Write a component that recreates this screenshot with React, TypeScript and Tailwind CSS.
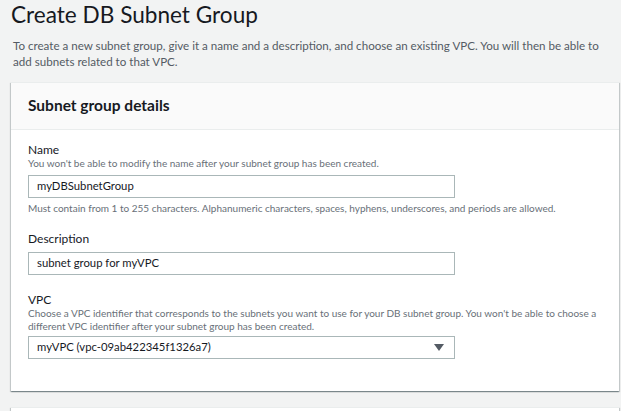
const FONT = "font-['Lato',sans-serif]";

function Field({
  label,
  hint,
  children,
  after,
  className = '',
}: {
  label: string;
  hint?: string;
  children: React.ReactNode;
  after?: string;
  className?: string;
}) {
  return (
    <div className={className}>
      <div className="text-[12px] leading-[14px] text-[#16191f]">{label}</div>
      {hint && <div className="max-w-[570px] text-[10px] leading-[13px] text-[#687078]">{hint}</div>}
      {children}
      {after && <div className="mt-[3px] text-[10px] leading-[14px] text-[#687078]">{after}</div>}
    </div>
  );
}

export default function App() {
  return (
    <div className={`h-[411px] w-[621px] overflow-hidden bg-[#f2f3f3] pl-[11px] pr-[2px] ${FONT}`}>
      <h1 className="text-[22.6px] leading-[30px] text-[#16191f]">Create DB Subnet Group</h1>
      <p className="mt-[8px] pl-[2px] text-[11.6px] leading-[16px] text-[#545b64]">
        To create a new subnet group, give it a name and a description, and choose an existing VPC. You will then be able to
        add subnets related to that VPC.
      </p>

      <div className="mt-[12px] bg-white shadow-[0_1px_1px_0_rgba(0,28,36,0.3),1px_1px_1px_0_rgba(0,28,36,0.15),-1px_1px_1px_0_rgba(0,28,36,0.15)] border-t border-[#eaeded]">
        <div className="flex h-[47px] items-center border-b border-[#eaeded] bg-[#fafafa] px-[17px]">
          <h2 className="text-[15.5px] font-bold text-[#16191f]">Subnet group details</h2>
        </div>
        <div className="px-[17px] pt-[13px] pb-[32px]">
          <Field
            label="Name"
            hint="You won't be able to modify the name after your subnet group has been created."
            after="Must contain from 1 to 255 characters. Alphanumeric characters, spaces, hyphens, underscores, and periods are allowed."
          >
            <div className="mt-[5px] flex h-[23px] w-[427px] items-center border border-[#aab7b8] px-[8px] text-[11.3px] text-[#16191f]">
              myDBSubnetGroup
            </div>
          </Field>

          <Field label="Description" className="mt-[17px]">
            <div className="mt-[6px] flex h-[23px] w-[427px] items-center border border-[#aab7b8] px-[8px] text-[11.3px] text-[#16191f]">
              subnet group for myVPC
            </div>
          </Field>

          <Field
            label="VPC"
            hint="Choose a VPC identifier that corresponds to the subnets you want to use for your DB subnet group. You won't be able to choose a different VPC identifier after your subnet group has been created."
            className="mt-[18px]"
          >
            <div className="mt-[3px] flex h-[23px] w-[427px] items-center justify-between border border-[#aab7b8] pl-[8px] pr-[10px] text-[11.3px] text-[#16191f]">
              <span>myVPC (vpc-09ab422345f1326a7)</span>
              <svg width="10" height="7" viewBox="0 0 10 7">
                <path d="M0 0 H10 L5 7 Z" fill="#545b64" />
              </svg>
            </div>
          </Field>
        </div>
      </div>

      <div className="mt-[16px] h-[40px] bg-white shadow-[0_1px_1px_0_rgba(0,28,36,0.3),1px_1px_1px_0_rgba(0,28,36,0.15),-1px_1px_1px_0_rgba(0,28,36,0.15)] border-t border-[#eaeded]" />
    </div>
  );
}
